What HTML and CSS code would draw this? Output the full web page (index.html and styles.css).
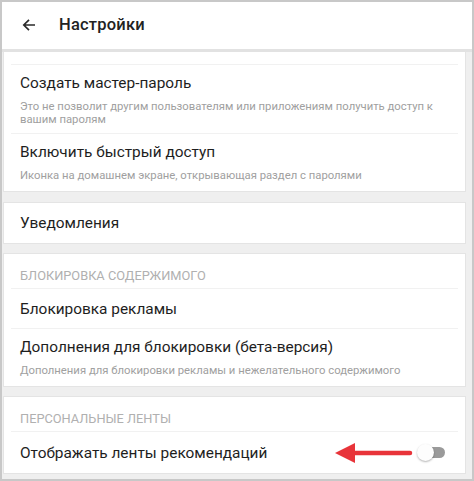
FILE: index.html
```html
<!DOCTYPE html>
<html lang="ru">
<head>
<meta charset="utf-8">
<title>Настройки</title>
<link rel="stylesheet" href="styles.css">
</head>
<body>
<div class="frame">
  <header class="header">
    <svg class="back" viewBox="0 0 14 14" width="14" height="14"><path d="M13 7H1.8M7 1.8L1.8 7 7 12.2" fill="none" stroke="#2a2a2a" stroke-width="1.7"/></svg>
    <h1 class="title">Настройки</h1>
  </header>
  <main class="content">
    <section class="card card-first">
      <div class="cut"></div>
      <div class="row row-desc row-desc-a">
        <div class="row-title">Создать мастер-пароль</div>
        <div class="row-text">Это не позволит другим пользователям или приложениям получить доступ к вашим паролям</div>
      </div>
      <div class="row row-desc row-last">
        <div class="row-title">Включить быстрый доступ</div>
        <div class="row-text">Иконка на домашнем экране, открывающая раздел с паролями</div>
      </div>
    </section>
    <section class="card">
      <div class="row row-single row-last">
        <div class="row-title">Уведомления</div>
      </div>
    </section>
    <section class="card">
      <div class="section-head">Блокировка содержимого</div>
      <div class="row row-single">
        <div class="row-title">Блокировка рекламы</div>
      </div>
      <div class="row row-desc row-last">
        <div class="row-title">Дополнения для блокировки (бета-версия)</div>
        <div class="row-text">Дополнения для блокировки рекламы и нежелательного содержимого</div>
      </div>
    </section>
    <section class="card">
      <div class="section-head">Персональные ленты</div>
      <div class="row row-single row-toggle row-last">
        <div class="row-title">Отображать ленты рекомендаций</div>
        <div class="toggle"><span class="knob"></span></div>
        <svg class="pointer" viewBox="0 0 80 24" width="80" height="24"><line x1="18" y1="12" x2="75" y2="12" stroke="#e8343a" stroke-width="4.5" stroke-linecap="round"/><polygon points="0,12 20,2 20,22" fill="#e8343a"/></svg>
      </div>
    </section>
  </main>
</div>
</body>
</html>
```
FILE: styles.css
```css
* { box-sizing: border-box; }
html, body { margin: 0; padding: 0; }
body {
  font-family: Roboto, "Noto Sans", sans-serif;
  color: #1e1e1e;
  background: #fff;
}
.frame {
  width: 474px;
  height: 481px;
  border: 2px solid #c8c8c8;
  background: #efefef;
  overflow: hidden;
  display: flex;
  flex-direction: column;
}
.header {
  height: 50px;
  flex: none;
  background: #fff;
  border-bottom: 3px solid #e2e2e2;
  display: flex;
  align-items: center;
  padding-left: 20px;
  padding-bottom: 2px;
  position: relative;
  z-index: 1;
}
.back { display: block; }
.title {
  margin: 0 0 0 23px;
  font-size: 16.5px;
  font-weight: 500;
  color: #222;
  letter-spacing: 0.2px;
}
.content {
  display: flex;
  flex-direction: column;
  gap: 11px;
}
.card {
  background: #fff;
  margin: 0 7px 0 2px;
  box-shadow: 0 0 0 1px #e4e4e4;
  padding: 0 7px;
}
.card-first { margin-bottom: 1px; }
.cut {
  height: 13px;
  border-bottom: 1px solid #f1f1f1;
}
.row {
  border-bottom: 1px solid #f1f1f1;
  padding-left: 9px;
  padding-right: 8px;
}
.row-last { border-bottom: none; }
.row-title {
  font-size: 15.4px;
  line-height: 20px;
  color: #1e1e1e;
}
.row-desc { padding-top: 8px; padding-bottom: 9px; }
.row-desc-a { padding-bottom: 7px; }
.row-text {
  margin-top: 7px;
  font-size: 11.3px;
  line-height: 13px;
  color: #a0a0a0;
}
.row-single {
  height: 40px;
  display: flex;
  align-items: center;
}
.section-head {
  padding: 15px 0 6px 9px;
  font-size: 12.8px;
  line-height: 13px;
  text-transform: uppercase;
  color: #b0b0b0;
  border-bottom: 1px solid #f1f1f1;
}
.row-toggle {
  position: relative;
  height: 41px;
}
.toggle {
  margin-left: auto;
  margin-right: 5px;
  width: 26px;
  height: 11px;
  border-radius: 6px;
  background: #9a9a9a;
  position: relative;
}
.knob {
  position: absolute;
  left: -2px;
  top: -3px;
  width: 17px;
  height: 17px;
  border-radius: 50%;
  background: #fdfdfd;
  box-shadow: 0 1px 2px rgba(0,0,0,0.3);
}
.pointer {
  position: absolute;
  left: 324px;
  top: 9px;
}
```
